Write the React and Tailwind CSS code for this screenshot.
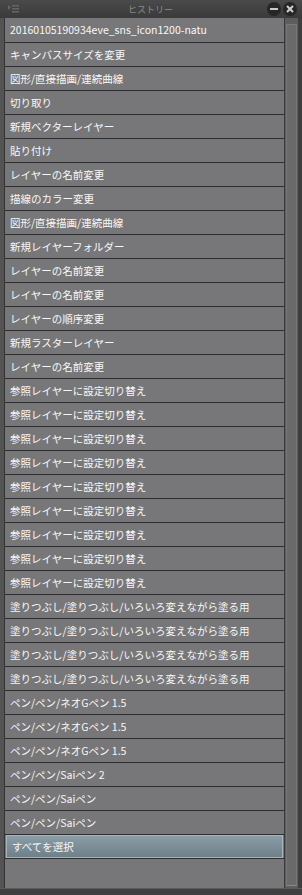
import React from 'react';

const items = [
  '20160105190934eve_sns_icon1200-natu',
  'キャンバスサイズを変更',
  '図形/直接描画/連続曲線',
  '切り取り',
  '新規ベクターレイヤー',
  '貼り付け',
  'レイヤーの名前変更',
  '描線のカラー変更',
  '図形/直接描画/連続曲線',
  '新規レイヤーフォルダー',
  'レイヤーの名前変更',
  'レイヤーの名前変更',
  'レイヤーの順序変更',
  '新規ラスターレイヤー',
  'レイヤーの名前変更',
  '参照レイヤーに設定切り替え',
  '参照レイヤーに設定切り替え',
  '参照レイヤーに設定切り替え',
  '参照レイヤーに設定切り替え',
  '参照レイヤーに設定切り替え',
  '参照レイヤーに設定切り替え',
  '参照レイヤーに設定切り替え',
  '参照レイヤーに設定切り替え',
  '参照レイヤーに設定切り替え',
  '塗りつぶし/塗りつぶし/いろいろ変えながら塗る用',
  '塗りつぶし/塗りつぶし/いろいろ変えながら塗る用',
  '塗りつぶし/塗りつぶし/いろいろ変えながら塗る用',
  '塗りつぶし/塗りつぶし/いろいろ変えながら塗る用',
  'ペン/ペン/ネオGペン 1.5',
  'ペン/ペン/ネオGペン 1.5',
  'ペン/ペン/ネオGペン 1.5',
  'ペン/ペン/Saiペン 2',
  'ペン/ペン/Saiペン',
  'ペン/ペン/Saiペン',
  'すべてを選択',
];

const font = { fontFamily: '"Noto Sans CJK JP", "Liberation Sans", sans-serif' };

const App = () => {
  return (
    <div className="w-[302px] h-[895px] bg-[#4b4b4b] flex flex-col overflow-hidden" style={font}>
      {/* Title bar */}
      <div className="h-[18px] flex items-center bg-gradient-to-b from-[#4a4a4a] to-[#3a3a3a]">
        <svg width="12" height="10" viewBox="0 0 12 10" className="ml-[8px]">
          <path d="M0 1 L3 3.5 L0 6 Z" fill="#666" />
          <rect x="4" y="1" width="7" height="1.5" fill="#666" />
          <rect x="4" y="4" width="7" height="1.5" fill="#666" />
          <rect x="4" y="7" width="7" height="1.5" fill="#666" />
        </svg>
        <div className="flex-1 text-center text-[9px] leading-none text-[#8c8c8c] pl-[14px]">ヒストリー</div>
        <div className="flex gap-[2px] mr-[5px]">
          <div className="w-[14px] h-[14px] rounded-full bg-[#262626] flex items-center justify-center">
            <div className="w-[8px] h-[2px] bg-[#c8c8c8]" />
          </div>
          <div className="w-[14px] h-[14px] rounded-full bg-[#262626] flex items-center justify-center">
            <svg width="8" height="8" viewBox="0 0 8 8">
              <path d="M1 1 L7 7 M7 1 L1 7" stroke="#d0d0d0" strokeWidth="2" />
            </svg>
          </div>
        </div>
      </div>

      <div className="flex-1 flex min-h-0">
        {/* left frame */}
        <div className="w-[5px] bg-[#535353] border-r border-[#343434]" />

        {/* list */}
        <div className="flex-1 bg-[#77777a] flex flex-col">
          {items.map((t, i) => {
            const selected = i === items.length - 1;
            return (
              <div
                key={i}
                className="h-[24px] border-t border-[#2e2e30] first:border-t-0 flex"
              >
                <div
                  className={`flex-1 flex items-center pl-[5px] text-[10.5px] text-[#f7f7f7] whitespace-nowrap ${
                    selected ? 'bg-gradient-to-b from-[#8a9ca6] to-[#6f8089] border border-[#a6b4bc] mx-[1px] pl-[4px]' : ''
                  }`}
                >
                  {t}
                </div>
              </div>
            );
          })}
          <div className="flex-1 border-t border-[#2e2e30]" />
        </div>

        {/* scrollbar */}
        <div className="w-[14px] bg-[#5d5d5d] border-l border-[#3a3a3a] flex flex-col pt-[6px] pb-[2px]">
          <div className="flex-1 mx-[1px] bg-[#6a6a6a] border border-[#777] border-b-[#8a8a8a]" />
        </div>

        {/* right frame */}
        <div className="w-[4px] bg-[#3e3e3e]" />
      </div>

      <div className="h-[7px] bg-[#404040] border-t border-[#5a5a5a]" />
    </div>
  );
};

export default App;
